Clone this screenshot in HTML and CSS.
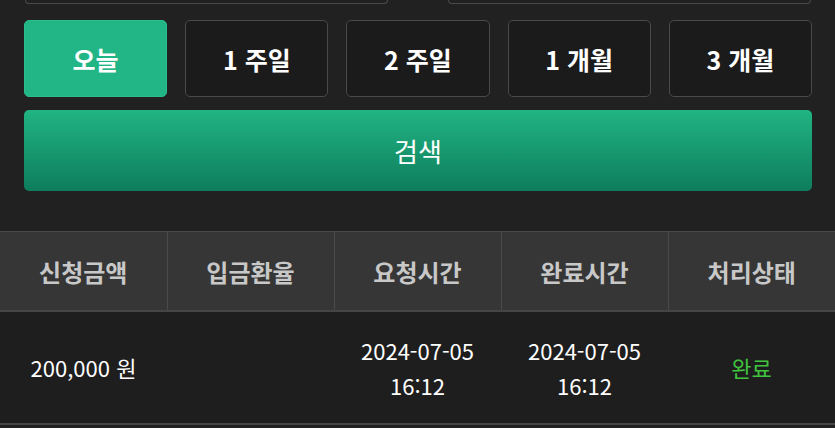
FILE: index.html
```html
<!DOCTYPE html>
<html lang="ko">
<head>
<meta charset="utf-8">
<link rel="stylesheet" href="styles.css">
</head>
<body>
<div class="form">
  <div class="inputs">
    <div class="input"></div>
    <div class="input"></div>
  </div>
  <div class="periods">
    <button class="period active">오늘</button>
    <button class="period">1 주일</button>
    <button class="period">2 주일</button>
    <button class="period">1 개월</button>
    <button class="period">3 개월</button>
  </div>
  <button class="search">검색</button>
</div>
<table class="list">
  <thead>
    <tr>
      <th>신청금액</th>
      <th>입금환율</th>
      <th>요청시간</th>
      <th>완료시간</th>
      <th>처리상태</th>
    </tr>
  </thead>
  <tbody>
    <tr>
      <td>200,000 원</td>
      <td></td>
      <td>2024-07-05<br>16:12</td>
      <td>2024-07-05<br>16:12</td>
      <td class="done">완료</td>
    </tr>
  </tbody>
</table>
</body>
</html>
```
FILE: styles.css
```css
html, body {
  margin: 0;
  padding: 0;
  background: #212121;
  font-family: "Noto Sans CJK KR", "Noto Sans", sans-serif;
  color: #fff;
  overflow: hidden;
}
.form {
  padding: 0 23px 0 24px;
}
.inputs {
  display: flex;
  justify-content: space-between;
  padding: 0 1px 0 1px;
}
.input {
  width: 361px;
  height: 3px;
  border: 1.5px solid #4a4a4a;
  border-top: none;
  border-radius: 0 0 5px 5px;
}
.periods {
  display: grid;
  grid-template-columns: repeat(5, 1fr);
  gap: 18px;
  margin-top: 16px;
}
.period {
  height: 77px;
  background: #1b1b1b;
  border: 1.5px solid #4a4a4a;
  border-radius: 5px;
  color: #fff;
  font-family: inherit;
  font-size: 25px;
  font-weight: 700;
  padding: 0;
}
.period.active {
  background: #22b585;
  border-color: #2bbd8c;
}
.search {
  display: block;
  width: 100%;
  height: 81px;
  margin-top: 13px;
  border: none;
  border-radius: 5px;
  background: linear-gradient(#21b483, #0e7d5c);
  color: #fff;
  font-family: inherit;
  font-size: 26px;
  font-weight: 400;
  padding: 0;
}
.list {
  width: 100%;
  margin-top: 40px;
  border-collapse: collapse;
  table-layout: fixed;
}
.list th {
  height: 78px;
  background: #363636;
  color: #c8c8c8;
  font-size: 24px;
  font-weight: 700;
  border-top: 1px solid #484848;
  border-bottom: 2px solid #454545;
  border-left: 1.5px solid #4a4a4a;
  padding: 0;
}
.list th:first-child { border-left: none; }
.list td {
  height: 111px;
  background: #1e1e1e;
  font-size: 22px;
  line-height: 35px;
  text-align: center;
  border-bottom: 2px solid #454545;
  padding: 0;
}
.list td.first { }
.list td.done {
  color: #40c43e;
}
```
